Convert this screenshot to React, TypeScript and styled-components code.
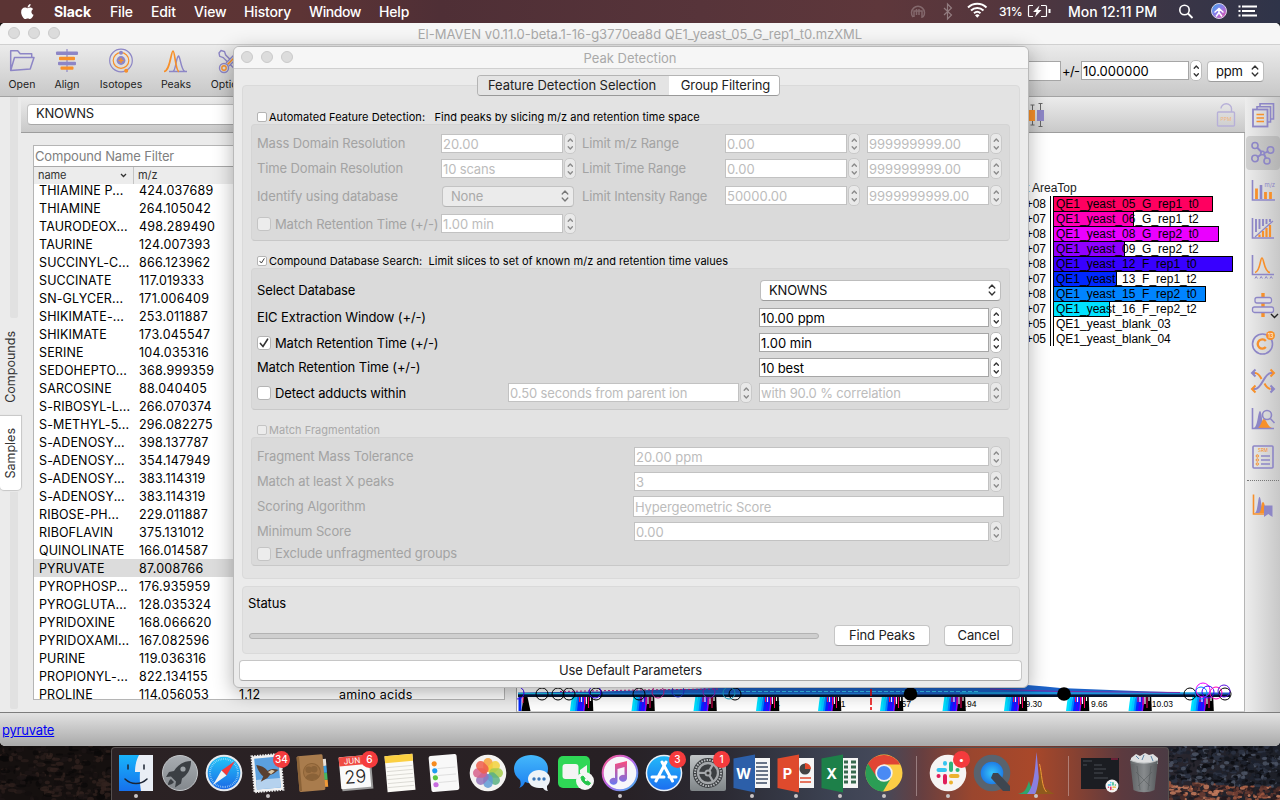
import React from 'react';
import styled, { createGlobalStyle, css } from 'styled-components';

const P = '#8d86c6';
const O = '#f7902b';

const GlobalStyle = createGlobalStyle`
  * { box-sizing: border-box; }
  body { margin: 0; overflow: hidden; font-family: Inter, 'Liberation Sans', sans-serif; }
  svg { display: block; flex: none; }
`;

const Desktop = styled.div`
  position: relative;
  width: 1280px;
  height: 800px;
  overflow: hidden;
  display: flex;
  flex-direction: column;
  background: linear-gradient(90deg, #15100f 0, #15100f 111px, #2a2023 400px, #8a4030 1000px, #29262e 1169px, #1d2028 1280px);
  font-size: 13px;
  color: #000;
`;

/* ---------- menu bar ---------- */
const MenuBar = styled.header`
  height: 23px;
  flex: none;
  display: flex;
  align-items: center;
  padding: 0 0 1px 20px;
  color: #fff;
  font-size: 14px;
  font-weight: 500;
  background: linear-gradient(90deg, #5b3434 0, #5d3435 300px, #4f2f36 440px, #57343a 700px, #5e373b 880px, #54363d 1000px, #403645 1120px, #2f3449 1280px);
`;
const MenuItem = styled.span<{ $w: number; $bold?: boolean; $ls?: number }>`
  width: ${(p) => p.$w}px;
  flex: none;
  white-space: nowrap;
  font-weight: ${(p) => (p.$bold ? 700 : 500)};
  letter-spacing: ${(p) => p.$ls ?? -0.15}px;
`;
const MenuExtras = styled.div`
  margin-left: auto;
  display: flex;
  align-items: center;
  padding-right: 22px;
`;
const Clock = styled.span`
  width: 110px;
  letter-spacing: -0.02px;
  white-space: nowrap;
`;
const Percent = styled.span`
  width: 28px;
  font-size: 12px;
  letter-spacing: -0.4px;
`;

/* ---------- shared window parts ---------- */
const TitleBar = styled.div<{ $h: number }>`
  height: ${(p) => p.$h}px;
  flex: none;
  position: relative;
  display: flex;
  align-items: center;
  justify-content: center;
  background: #f6f6f6;
  border-bottom: 1px solid #d0d0d0;
  color: #a9a9a9;
  font-size: 13px;
  white-space: nowrap;
`;
const Lights = styled.div<{ $x: number }>`
  position: absolute;
  left: ${(p) => p.$x}px;
  top: 4px;
  display: flex;
  gap: 8px;
`;
const Light = styled.i`
  width: 12px;
  height: 12px;
  border-radius: 50%;
  background: #dcdcdc;
  border: 1px solid #cacaca;
`;
const TitleText = styled.span<{ $pr?: number }>`
  padding-right: ${(p) => p.$pr ?? 0}px;
`;

const MainWindow = styled.section`
  height: 723px;
  flex: none;
  display: flex;
  flex-direction: column;
  background: #ebebeb;
  border-radius: 5px;
  overflow: hidden;
`;
const Toolbar = styled.div`
  height: 52px;
  flex: none;
  display: flex;
  background: linear-gradient(#ebebeb, #c8c8c8);
  border-bottom: 1px solid #a3a3a3;
`;
const Tool = styled.div<{ $w: number }>`
  width: ${(p) => p.$w}px;
  flex: none;
  display: flex;
  flex-direction: column;
  align-items: center;
  padding-top: 3px;
  font-size: 10.5px;
  line-height: 13px;
  color: #222;
  gap: 4px;
  white-space: nowrap;
`;
const ToolbarFields = styled.div`
  margin-left: auto;
  display: flex;
  align-items: center;
  padding-right: 16px;
`;
const PlusMinus = styled.span`
  width: 20px;
  padding-left: 1px;
  letter-spacing: -0.7px;
`;

const Body = styled.div`
  height: 615px;
  flex: none;
  display: flex;
`;

/* ---------- left rail ---------- */
const Rail = styled.div`
  width: 21px;
  flex: none;
  display: flex;
  flex-direction: column;
  padding-bottom: 3px;
`;
const RailStrip = styled.div<{ $h?: number }>`
  margin-left: 10px;
  width: 8px;
  ${(p) => (p.$h ? `height: ${p.$h}px;` : 'flex: 1; margin-top: 2px;')}
  background: #e1e1e1;
  border-radius: 0 0 2px 2px;
`;
const RailTab = styled.div<{ $h: number; $on?: boolean }>`
  height: ${(p) => p.$h}px;
  display: flex;
  align-items: center;
  justify-content: center;
  font-size: 12.5px;
  color: #333;
  ${(p) =>
    p.$on &&
    css`
      background: #fff;
      border-radius: 0 0 4px 4px;
      box-shadow: 0 0 1px 1px #c6c6c6;
    `}
  span {
    writing-mode: vertical-rl;
    transform: rotate(180deg);
    line-height: 20px;
  }
`;

/* ---------- compounds ---------- */
const Compounds = styled.div`
  width: 495px;
  flex: none;
  display: flex;
  flex-direction: column;
`;
const PanelBar = styled.div`
  height: 36px;
  flex: none;
  display: flex;
  align-items: center;
  background: linear-gradient(#ececec, #c9c9c9);
  border-bottom: 1px solid #9d9d9d;
`;
const WideSelect = styled.div`
  margin: -1px 0 0 6px;
  width: 480px;
  height: 21px;
  background: #fff;
  border: 1px solid #c3c3c3;
  border-bottom-color: #a8a8a8;
  border-radius: 4px;
  padding-left: 8px;
  line-height: 17px;
  color: #222;
  letter-spacing: -0.25px;
`;
const Table = styled.div`
  margin: 12px 0 0 12px;
  width: 472px;
  height: 555px;
  display: flex;
  flex-direction: column;
  border: 1px solid #b5b5b5;
  background: #fff;
`;
const Filter = styled.div`
  height: 21px;
  flex: none;
  border-bottom: 1px solid #a9a9a9;
  padding: 1px 0 0 1px;
  line-height: 18px;
  color: #808080;
  letter-spacing: -0.14px;
`;
const HeadRow = styled.div`
  height: 17px;
  flex: none;
  display: flex;
  background: #ececec;
  font-size: 11px;
  line-height: 17px;
  color: #333;
`;
const HeadCell = styled.div<{ $w: number }>`
  width: ${(p) => p.$w}px;
  display: flex;
  align-items: center;
  justify-content: space-between;
  padding: 0 6px 0 4px;
  letter-spacing: -0.1px;
  border-right: 1px solid #c4c4c4;
`;
const Rows = styled.div`
  flex: 1;
  overflow: hidden;
  min-height: 0;
`;
const RowList = styled.div`
  margin-top: -3px;
`;
const Row = styled.div<{ $on?: boolean }>`
  height: 18px;
  display: flex;
  line-height: 19px;
  padding-left: 5px;
  white-space: nowrap;
  font-size: 12.5px;
  background: ${(p) => (p.$on ? '#dcdcdc' : 'transparent')};
`;
const NameCell = styled.span`
  width: 100px;
  letter-spacing: 0.12px;
`;
const NumCell = styled.span`
  width: 100px;
  letter-spacing: 0.24px;
`;

/* ---------- plot ---------- */
const PlotColumn = styled.div`
  width: 729px;
  flex: none;
  display: flex;
  flex-direction: column;
`;
const PlotBar = styled(PanelBar)`
  justify-content: flex-end;
  padding-right: 9px;
  gap: 171px;
`;
const Plot = styled.div`
  flex: 1;
  background: #fff;
  border-left: 1px solid #a0a0a0;
  border-right: 1px solid #b5b5b5;
  border-bottom: 1px solid #d0d0d0;
  display: flex;
  flex-direction: column;
`;
const AreaChart = styled.div`
  margin: 47px 0 0 504px;
  width: 220px;
  font-family: 'Liberation Sans', Arial, sans-serif;
  font-size: 12px;
`;
const AreaHead = styled.div`
  height: 16px;
  line-height: 16px;
  padding-left: 5px;
  color: #222;
`;
const AreaRow = styled.div`
  height: 15px;
  display: flex;
  line-height: 17px;
`;
const AreaExp = styled.span`
  width: 30px;
  flex: none;
  padding-right: 4px;
  text-align: right;
  border-right: 1px solid #000;
`;
const AreaBar = styled.div<{ $w: number; $c: string }>`
  margin-left: 2px;
  width: ${(p) => p.$w}px;
  height: ${(p) => (p.$w ? 16 : 15)}px;
  flex: none;
  white-space: nowrap;
  padding-left: 2px;
  background: ${(p) => p.$c};
  border: ${(p) => (p.$w ? '1px solid #000' : '0 solid #000')};
  border-left: 1px solid #000;
  line-height: ${(p) => (p.$w ? 15 : 17)}px;
`;
const AreaName = styled.span`
  position: relative;
  z-index: 1;
`;
const EicArea = styled.div`
  margin-top: auto;
`;

/* ---------- right toolbar ---------- */
const SideBar = styled.div`
  width: 35px;
  flex: none;
  display: flex;
  flex-direction: column;
  align-items: center;
  background: linear-gradient(90deg, #ededed, #c8c8c8);
`;
const SideTool = styled.div<{ $on?: boolean }>`
  width: 34px;
  height: 34px;
  margin: 1px 0 3px;
  flex: none;
  display: flex;
  align-items: center;
  justify-content: center;
  border-radius: 4px;
  background: ${(p) => (p.$on ? 'linear-gradient(90deg,#cfcfcf,#b4b4b4)' : 'none')};
`;
const Dotted = styled.div`
  width: 32px;
  margin: 3px 0 6px;
  border-top: 1px dotted #777;
`;
const StatusBar = styled.div`
  height: 34px;
  flex: none;
  background: linear-gradient(#e2e2e2, #a9a9a9);
  border-top: 1px solid #7c7c7c;
  padding: 8px 0 0 2px;
  line-height: 18px;
  a { color: #0000f5; text-decoration: underline; letter-spacing: -0.2px; }
`;

/* ---------- dialog ---------- */
const Dialog = styled.section`
  position: absolute;
  left: 233px;
  top: 46px;
  width: 796px;
  height: 642px;
  display: flex;
  flex-direction: column;
  background: #ebebeb;
  border: 1px solid #b9b9b9;
  border-radius: 6px;
  box-shadow: 0 5px 20px rgba(0, 0, 0, 0.3);
`;
const DialogTitle = styled(TitleBar)`
  border-radius: 5px 5px 0 0;
`;
const Tabs = styled.div`
  height: 21px;
  align-self: center;
  margin: 6px 0 -11px 0;
  position: relative;
  display: flex;
  border: 1px solid #b4b4b4;
  border-bottom-color: #999;
  border-radius: 4px;
  overflow: hidden;
  flex: none;
  transform: translateX(-3px);
`;
const Tab = styled.div<{ $w: number; $on?: boolean; $ls: number }>`
  width: ${(p) => p.$w}px;
  text-align: center;
  padding-left: ${(p) => (p.$on ? 4 : 0)}px;
  padding-right: ${(p) => (p.$on ? 0 : 2)}px;
  line-height: 19px;
  color: #222;
  white-space: nowrap;
  letter-spacing: ${(p) => p.$ls}px;
  background: ${(p) => (p.$on ? '#fff' : '#e4e4e4')};
`;
const TabPane = styled.div`
  margin: 0 8px;
  height: 494px;
  flex: none;
  padding: 23px 9px 0 8px;
  background: #e3e3e3;
  border: 1px solid #dadada;
  border-radius: 4px;
`;
const GroupTitle = styled.div<{ $off?: boolean }>`
  height: 15px;
  padding-left: 6px;
  display: flex;
  align-items: center;
  gap: 2px;
  font-size: 11px;
  letter-spacing: 0.035px;
  white-space: pre;
  color: ${(p) => (p.$off ? '#a9a9a9' : '#000')};
`;
const Group = styled.div<{ $h: number; $gap: number }>`
  height: ${(p) => p.$h}px;
  margin-bottom: ${(p) => p.$gap}px;
  background: #dadada;
  border: 1px solid #d4d4d4;
  border-bottom-color: #c8c8c8;
  border-radius: 4px;
  padding: 0 7px 0 5px;
`;
const FormRow = styled.div<{ $h: number; $pt?: number }>`
  height: ${(p) => p.$h}px;
  padding-top: ${(p) => p.$pt ?? 0}px;
  display: flex;
  align-items: center;
`;
const Label = styled.div<{ $w?: number; $off?: boolean; $dy?: number }>`
  ${(p) => (p.$w ? `width: ${p.$w}px; flex: none;` : 'flex: 1;')}
  display: flex;
  align-items: center;
  gap: 4px;
  padding-top: ${(p) => p.$dy ?? 0}px;
  white-space: nowrap;
  line-height: 17px;
  letter-spacing: -0.12px;
  color: ${(p) => (p.$off ? '#a3a3a3' : '#000')};
`;
const Box = styled.span<{ $s: number; $off?: boolean }>`
  width: ${(p) => p.$s}px;
  height: ${(p) => p.$s}px;
  flex: none;
  display: flex;
  align-items: center;
  justify-content: center;
  background: ${(p) => (p.$off ? '#ececec' : '#fff')};
  border: 1px solid ${(p) => (p.$off ? '#c4c4c4' : '#b4b4b4')};
  border-radius: ${(p) => (p.$s > 12 ? 3 : 2)}px;
`;
const Field = styled.div<{ $w: number; $h?: number; $off?: boolean; $ls?: number; $mr?: number }>`
  width: ${(p) => p.$w}px;
  height: ${(p) => p.$h ?? 19}px;
  margin-right: ${(p) => p.$mr ?? 0}px;
  flex: none;
  background: #fff;
  border: 1px solid ${(p) => (p.$off ? '#c2c2c2' : '#a6a6a6')};
  padding: 1px 0 0 1px;
  line-height: ${(p) => (p.$h ?? 19) - 2}px;
  white-space: nowrap;
  letter-spacing: ${(p) => p.$ls ?? 0}px;
  color: ${(p) => (p.$off ? '#bcbcbc' : '#000')};
`;
const StepperBox = styled.span<{ $off?: boolean }>`
  width: 12px;
  height: 21px;
  flex: none;
  margin-left: 1px;
  background: ${(p) => (p.$off ? '#e9e9e9' : '#fff')};
  border: 1px solid ${(p) => (p.$off ? '#c9c9c9' : '#bcbcbc')};
  border-radius: 5px;
  display: flex;
  align-items: center;
  justify-content: center;
`;
const Select = styled.div<{ $w: number; $off?: boolean; $mt?: number }>`
  width: ${(p) => p.$w}px;
  height: 21px;
  margin-top: ${(p) => p.$mt ?? 0}px;
  flex: none;
  display: flex;
  align-items: center;
  justify-content: space-between;
  padding: 0 4px 1px 8px;
  border: 1px solid ${(p) => (p.$off ? '#c3c3c3' : '#bdbdbd')};
  border-bottom-color: ${(p) => (p.$off ? '#b4b4b4' : '#9d9d9d')};
  border-radius: 4px;
  background: ${(p) => (p.$off ? '#ebebeb' : '#fff')};
  color: ${(p) => (p.$off ? '#a9a9a9' : '#111')};
  line-height: 16px;
  letter-spacing: -0.2px;
`;
const Space = styled.span<{ $w: number }>`
  width: ${(p) => p.$w}px;
  flex: none;
`;
const StatusPane = styled.div`
  margin: 7px 8px 0;
  height: 68px;
  flex: none;
  padding: 8px 5px 0 5px;
  background: #e3e3e3;
  border: 1px solid #dadada;
  border-radius: 4px;
`;
const ProgressRow = styled.div`
  display: flex;
  align-items: center;
  margin-top: 13px;
  padding-left: 1px;
`;
const Progress = styled.div`
  width: 570px;
  height: 6px;
  border: 1px solid #b3b3b3;
  border-radius: 3px;
  background: #cfcfcf;
`;
const Button = styled.button<{ $w: number; $ml?: number }>`
  width: ${(p) => p.$w}px;
  margin-left: ${(p) => p.$ml ?? 0}px;
  height: 21px;
  flex: none;
  padding: 0 0 1px;
  font: inherit;
  line-height: 18px;
  letter-spacing: -0.13px;
  color: #222;
  background: #fff;
  border: 1px solid #c6c6c6;
  border-bottom-color: #a9a9a9;
  border-radius: 4px;
`;
const DefaultsRow = styled.div`
  padding: 6px 0 0 5px;
  display: flex;
`;

/* ---------- dock ---------- */
const Rocks = styled.div`
  position: absolute;
  left: 0;
  top: 746px;
`;
const DockBar = styled.nav`
  position: absolute;
  left: 111px;
  top: 747px;
  width: 1058px;
  height: 53px;
  padding: 0 2px;
  display: flex;
  border: 1px solid #56504f;
  border-bottom: 0;
  border-radius: 4px 4px 0 0;
  background: linear-gradient(90deg, #2b2224 0, #272024 500px, #2b2a33 610px, #3c4252 720px, #45495a 770px, #673f40 810px, #9a462e 860px, #a9482a 920px, #8a4231 960px, #5c3a3f 1010px, #4a3b44 1058px);
`;
const DockItem = styled.div`
  width: 44px;
  flex: none;
  position: relative;
  display: flex;
  justify-content: center;
  padding-top: 4px;
`;
const RunDot = styled.i`
  position: absolute;
  bottom: 2px;
  width: 4px;
  height: 4px;
  border-radius: 50%;
  background: #c9c4c6;
`;
const Badge = styled.b`
  position: absolute;
  top: 3px;
  right: 0;
  width: 17px;
  height: 17px;
  border-radius: 50%;
  background: #f53b3d;
  color: #fff;
  font-size: 10px;
  font-weight: 500;
  line-height: 17px;
  text-align: center;
`;
const DockSep = styled.div`
  width: 20px;
  flex: none;
  display: flex;
  justify-content: center;
  i { width: 1px; margin-top: 8px; height: 40px; background: rgba(220, 200, 200, 0.45); }
`;

/* ---------- small pieces ---------- */
const Arrows = ({ c = '#333', h = 13, w = 6 }: { c?: string; h?: number; w?: number }) => (
  <svg width={w + 2} height={h} viewBox={`0 0 ${w + 2} ${h}`} fill="none" stroke={c} strokeWidth="1.3" strokeLinecap="round" strokeLinejoin="round">
    <path d={`M1.2 ${w / 2 + 1} L${w / 2 + 1} 1 L${w + 0.8} ${w / 2 + 1}`} />
    <path d={`M1.2 ${h - w / 2 - 1} L${w / 2 + 1} ${h - 1} L${w + 0.8} ${h - w / 2 - 1}`} />
  </svg>
);
const Stepper = ({ off }: { off?: boolean }) => (
  <StepperBox $off={off}><Arrows c={off ? '#8a8a8a' : '#333'} h={12} w={4.6} /></StepperBox>
);
const Check = ({ s, on, off }: { s: number; on?: boolean; off?: boolean }) => (
  <Box $s={s} $off={off}>
    {on && (
      <svg width={s - 4} height={s - 4} viewBox="0 0 10 10" fill="none" stroke="#333" strokeWidth="1.6" strokeLinecap="round">
        <path d="M1.4 5.4 L4 8.4 L8.6 1.2" />
      </svg>
    )}
  </Box>
);
const Spin = ({ w, v, off }: { w: number; v: string; off?: boolean }) => (
  <><Field $w={w} $off={off} $ls={/[a-z]{4}/.test(v) ? -0.14 : 0}>{v}</Field><Stepper off={off} /></>
);
const WindowLights = ({ x }: { x: number }) => <Lights $x={x}><Light /><Light /><Light /></Lights>;

/* ---------- toolbar icons ---------- */
const OpenIcon = () => (
  <svg width="26" height="26" viewBox="0 0 26 26" fill="none" stroke={P} strokeWidth="1.5" strokeLinejoin="round">
    <path d="M1.700 22.500V2.700h7l2.500 3h11.500v4M1.700 22.500L5.500 9.500h19.500l-3.800 11.500z" />
  </svg>
);
const AlignIcon = () => (
  <svg width="26" height="26" viewBox="0 0 26 26">
    <path d="M13 1v23" stroke={P} strokeWidth="1.200" />
    <rect x="2" y="3.500" width="22" height="3.500" rx="1" fill={P} />
    <rect x="5" y="8.800" width="16" height="3.500" rx="1" fill={O} />
    <rect x="4" y="13.800" width="18" height="3.500" rx="1" fill={P} />
    <rect x="6.500" y="18.500" width="13" height="3.300" rx="1" fill={O} />
  </svg>
);
const IsotopeIcon = () => (
  <svg width="26" height="26" viewBox="0 0 26 26" fill="none">
    <circle cx="13" cy="12.500" r="11.300" stroke={P} strokeWidth="1.200" />
    <circle cx="13" cy="12.500" r="7.800" stroke={O} strokeWidth="1.200" />
    <circle cx="13" cy="12.500" r="4.400" fill={P} />
    <path d="M13 10v5M10.500 12.500h5" stroke={O} strokeWidth="1.300" />
    <circle cx="13" cy="4.700" r="2" fill={P} />
    <circle cx="18.200" cy="22.700" r="2" fill={O} />
  </svg>
);
const PeaksIcon = () => (
  <svg width="26" height="26" viewBox="0 0 26 26" fill="none" strokeWidth="1.400">
    <path d="M6 23.500h18M10 23.500c3-1 3-14.500 5.500-15.500 2 1 2.500 14.500 6.500 15.500" stroke={P} />
    <path d="M1 23.500c6 0 7-20.500 9-20.500s2.500 20.500 6 20.500" stroke={O} strokeWidth="1.700" />
  </svg>
);
const OptionsIcon = () => (
  <svg width="26" height="26" viewBox="0 0 26 26" fill="none" strokeWidth="1.400">
    <path d="M4 2.500l3.500 1 1.200 3.500 14 14-2.500 2.500-14-14-3.500-1.200L2 5z" stroke={P} />
    <path d="M9 15L20 4l3 3-11 11" stroke={P} fill="#dcdcdc" />
    <path d="M10.500 16.500L21 6" stroke={O} strokeWidth="1.600" />
    <circle cx="7" cy="20" r="4.500" stroke={P} fill="#dcdcdc" />
    <circle cx="7" cy="20" r="2.200" stroke={O} />
  </svg>
);
const BoxPlotIcon = () => (
  <svg width="20" height="26" viewBox="0 0 20 26">
    <path d="M7.500 3v20M15.500 1v24M5.500 3h4M5.500 23h4M13.500 1.500h4M13.500 24.500h4" stroke="#666" />
    <rect x="2" y="8" width="8" height="11" fill={O} />
    <rect x="12" y="8" width="7" height="11" fill={P} />
  </svg>
);
const LockIcon = () => (
  <svg width="20" height="26" viewBox="0 0 20 26" fill="none" stroke="#b7b0d8" strokeWidth="1.400">
    <path d="M5 6.500a5 4.500 0 0 1 10.500 0V10" />
    <rect x="1.500" y="10" width="17" height="14" rx="1" />
    <text x="10" y="19" fontSize="5" textAnchor="middle" fill="#f3b57c" stroke="none" fontFamily="Inter">PPM</text>
  </svg>
);

const SideIcon = ({ children }: { children: React.ReactNode }) => (
  <svg width="26" height="26" viewBox="0 0 26 26" fill="none" stroke={P} strokeWidth="1.600">{children}</svg>
);
const sideIcons: React.ReactNode[] = [
  <>
    <path d="M10 5V1.700h13.500V17H20M7 8V4.700h13.500V20H17" />
    <rect x="3" y="7.500" width="14.500" height="17" strokeWidth="1.800" />
    <path d="M6.500 12.500h7.500M6.500 16h7.500M6.500 19.500h7.500" stroke={O} />
  </>,
  <>
    <path d="M7 7.500l5 5M15 13l3.500-2M11 14.500l-4 3M14 14l2 4.500" strokeWidth="2" />
    <circle cx="5" cy="5.500" r="3" /><circle cx="20.500" cy="10" r="3.200" /><circle cx="5" cy="18.500" r="3.200" /><circle cx="17" cy="21" r="3" /><circle cx="12.500" cy="13" r="1.800" />
  </>,
  <>
    <path d="M2.500 2v20H25" />
    <path d="M6.500 10.500v10.500M15.500 14v7M20.500 14v7" stroke={O} strokeWidth="2.800" />
    <path d="M11 7v14" strokeWidth="2.600" />
    <text x="19.800" y="9" fontSize="6" textAnchor="middle" fill={P} stroke="none" fontFamily="Inter">m/z</text>
  </>,
  <>
    <path d="M2.500 2v20H24" />
    <path d="M6 3v13M9.500 3v10M13 3v7M16.500 3v5M20 3v3" strokeWidth="1.900" />
    <path d="M5 21L23 5" strokeWidth="1.200" />
    <path d="M9.500 21v-2.500M13 21v-6M16.500 21V12M20 21V9" stroke={O} strokeWidth="2.200" />
  </>,
  <>
    <path d="M2.500 1v19.500H24" />
    <path d="M5 18.500c5.500-1 5-14.500 7-14.500s1.800 14 8 14.500" stroke={O} />
    <path d="M5 24.500l1.200-2 1.200 2M10 24.500l1.200-2 1.200 2M15 24.500l1.200-2 1.200 2M20 24.500l1.200-2 1.200 2" strokeWidth="1" />
  </>,
  <>
    <path d="M13 1v24" stroke={O} strokeWidth="3.400" />
    <rect x="5" y="5.500" width="16.500" height="5.500" rx="2" fill="#dedde4" strokeWidth="1.300" />
    <rect x="2.500" y="15" width="21" height="5.500" rx="2" fill="#dedde4" strokeWidth="1.300" />
  </>,
  <>
    <circle cx="12.500" cy="14" r="10" />
    <path d="M15.800 11a4.600 4.600 0 1 0 0 6" stroke={O} strokeWidth="2.300" />
    <circle cx="20.500" cy="5.500" r="4.500" fill={O} stroke="none" />
    <text x="20.500" y="7.600" fontSize="5.500" textAnchor="middle" fill="#fff" stroke="none" fontFamily="Inter">13</text>
  </>,
  <>
    <path d="M23 5h-2c-7 0-9 16-16 16H3" strokeWidth="2" />
    <path d="M20.500 17.500L24 21l-3.500 3.500M24 21h-3" strokeWidth="2" />
    <path d="M5.500 1.500L2 5l3.500 3.500M2 5h3" strokeWidth="2" />
    <path d="M5 5c3 0 5 3 6.500 6M14.500 15.500c1.500 3 3.500 5 6 5.500" stroke={O} strokeWidth="2" />
    <path d="M20.500 1.500L24 5l-3.500 3.500M5.500 17.500L2 21l3.500 3.500" stroke={O} strokeWidth="2" />
  </>,
  <>
    <path d="M4 22c4-2 4-17 6-17s2 15 5 17z" fill={P} stroke="none" />
    <path d="M8 22c3-2 4-9 6-9s4 8 8 9z" fill={O} stroke="none" />
    <path d="M2.500 2v20.500H24" />
    <circle cx="17" cy="9" r="4.500" /><path d="M20.300 12.500L24.500 17" />
  </>,
  <>
    <rect x="3" y="2" width="20" height="22" rx="1" />
    <text x="13" y="8" fontSize="4.500" textAnchor="middle" fill={O} stroke="none" fontFamily="Inter">SRM</text>
    <path d="M11 12h9M11 16h9M11 20h9" strokeWidth="1.400" />
    <g stroke={O} strokeWidth="1"><circle cx="7.300" cy="12" r="1.200" /><circle cx="7.300" cy="16" r="1.200" /><circle cx="7.300" cy="20" r="1.200" /></g>
  </>,
];
const BookmarkPeakIcon = () => (
  <SideIcon>
    <path d="M5 21c3-2 3-16 4.500-16s2 14 5 16z" fill={P} stroke="none" />
    <path d="M9 21c3-2 2-11 4-11s2 9 5 11z" fill={O} stroke="none" />
    <path d="M3.500 2.500v19.500H16" stroke={O} />
    <path d="M14 13.500h8.500V25l-4.200-3-4.300 3z" fill={P} stroke="none" />
  </SideIcon>
);

/* ---------- data ---------- */
const compounds: [string, string][] = [
  ['THIAMINE P...', '424.037689'], ['THIAMINE', '264.105042'], ['TAURODEOX...', '498.289490'],
  ['TAURINE', '124.007393'], ['SUCCINYL-C...', '866.123962'], ['SUCCINATE', '117.019333'],
  ['SN-GLYCER...', '171.006409'], ['SHIKIMATE-...', '253.011887'], ['SHIKIMATE', '173.045547'],
  ['SERINE', '104.035316'], ['SEDOHEPTO...', '368.999359'], ['SARCOSINE', '88.040405'],
  ['S-RIBOSYL-L...', '266.070374'], ['S-METHYL-5...', '296.082275'], ['S-ADENOSY...', '398.137787'],
  ['S-ADENOSY...', '354.147949'], ['S-ADENOSY...', '383.114319'], ['S-ADENOSY...', '383.114319'],
  ['RIBOSE-PH...', '229.011887'], ['RIBOFLAVIN', '375.131012'], ['QUINOLINATE', '166.014587'],
  ['PYRUVATE', '87.008766'], ['PYROPHOSP...', '176.935959'], ['PYROGLUTA...', '128.035324'],
  ['PYRIDOXINE', '168.066620'], ['PYRIDOXAMI...', '167.082596'], ['PURINE', '119.036316'],
  ['PROPIONYL-...', '822.134155'], ['PROLINE', '114.056053'],
];
const areas: [string, string, number, string][] = [
  ['+08', 'QE1_yeast_05_G_rep1_t0', 160, '#ff0060'],
  ['+07', 'QE1_yeast_06_G_rep1_t2', 81, '#ff00b8'],
  ['+08', 'QE1_yeast_08_G_rep2_t0', 166, '#ea00ff'],
  ['+07', 'QE1_yeast_09_G_rep2_t2', 72, '#9000ff'],
  ['+08', 'QE1_yeast_12_F_rep1_t0', 180, '#3800ff'],
  ['+07', 'QE1_yeast_13_F_rep1_t2', 64, '#0028ff'],
  ['+08', 'QE1_yeast_15_F_rep2_t0', 153, '#0084ff'],
  ['+07', 'QE1_yeast_16_F_rep2_t2', 57, '#00e1ff'],
  ['+05', 'QE1_yeast_blank_03', 0, 'transparent'],
  ['+05', 'QE1_yeast_blank_04', 0, 'transparent'],
];

/* ---------- chromatogram strip ---------- */
const combStarts = [570, 631.5, 693.5, 756, 818, 880, 942.5, 1004, 1066, 1128.5, 1190.5];
const wedges: [number, string][] = [
  [3, '#00e1ff'], [5.5, '#00c8ff'], [8, '#0084ff'], [10, '#0028ff'], [12.5, '#3800ff'],
  [14.5, '#0028ff'], [16, '#9000ff'], [17.5, '#000'], [19.5, '#000'], [21.5, '#000'],
];
const Comb = ({ x }: { x: number }) => (
  <g transform={`translate(${x} 17)`}>
    {wedges.map(([dx, c], i) => (
      <path key={i} d={`M${dx - 3} 14L${dx - 1.2} 0h2.400L${dx + 1.8} 14z`} fill={c} />
    ))}
    <path d="M9.500 0v5M14.500 0v8M18.500 0v11" stroke="#ff0060" strokeWidth="1" />
    <path d="M11.500 0v5M16.500 0v7M20.500 0v4" stroke="#fff" strokeWidth="1.200" />
  </g>
);
const ring = (x: number, c: string, y = 14, r = 6) => <circle key={`${x}${y}`} cx={x} cy={y} r={r} fill="none" stroke={c} />;
const Eic = () => (
  <svg width="727" height="31" viewBox="517 0 727 31">
    <path d="M518 12.500 L560 12 600 11.500 650 10 690 9 740 7 1005 7 1020 6.500 1027 5 1045 6.500 1060 8 1110 10 1150 11.500 1185 12.500 1230 12.500 V16 H518z" fill="#1c62c8" />
    <path d="M518 13.500H900M960 13h250" stroke="#19c4e8" strokeWidth="1" />
    <path d="M600 14H900" stroke="#1f7fe0" strokeWidth="2" />
    <path d="M560 11.500L640 10 720 9" stroke="#c01a8a" strokeDasharray="2 2" fill="none" />
    <path d="M990 9L1060 11.500 1180 12.500" stroke="#7a2ca8" fill="none" />
    <path d="M740 11.500H980" stroke="#35c4f0" strokeDasharray="4 2" />
    <rect x="518" y="14.500" width="712" height="2.500" fill="#051530" />
    <g fontFamily="Liberation Sans" fontSize="8.500" textAnchor="end" fill="#000">
      {['7.84', '8.21', '8.57', '8.94', '9.30', '9.66', '10.03'].map((t, i) => (
        <text key={t} x={780 + i * 65.5} y="27">{t}</text>
      ))}
    </g>
    <g transform="translate(518.500 17)">
      <path d="M0 0h3v14h-3z" fill="#0028ff" /><path d="M3 14L5 0h4l3 14z" fill="#000" /><path d="M4.500 0v6" stroke="#ff0060" />
    </g>
    {combStarts.map((x) => <Comb key={x} x={x} />)}
    {[542, 558, 569, 596, 639, 735, 1190, 1225].map((x) => ring(x, '#000'))}
    {ring(595, '#3800ff', 12)}{ring(658, '#c01a8a', 12)}{ring(678, '#2430d0', 11)}{ring(709, '#8a20c0', 12)}{ring(729, '#19a8c8', 13)}{ring(518, '#3800ff', 13)}
    {ring(1203, '#ea00ff', 10, 7)}{ring(1201, '#0084ff', 13)}{ring(1208, '#3800ff', 12)}{ring(1216, '#ff00b8', 13)}{ring(1224, '#5a10e0', 11)}
    <path d="M871 9v21" stroke="#e00" strokeWidth="1.500" strokeDasharray="7 2" />
    <circle cx="910.500" cy="14" r="6.800" /><circle cx="1064" cy="14" r="6.800" />
  </svg>
);

/* ---------- desktop rock texture ---------- */
const shade = ['#2c201d', '#1c1516', '#0a0808', '#33241f', '#120e0e'];
const shadeR = ['#2d3444', '#14161d', '#4b5364', '#1d222e', '#0c0d12'];
const shadeB = ['#a0583f', '#4a2c28', '#c47a5c', '#231a1e', '#6b3c33'];
const RockTexture = () => {
  const cells: React.ReactNode[] = [];
  let seed = 7;
  const rnd = () => { seed = (seed * 16807) % 2147483647; return seed / 2147483647; };
  for (let i = 0; i < 260; i++) {
    const x = rnd() * 112, y = rnd() * 54, k = Math.floor(rnd() * 5);
    cells.push(<ellipse key={`l${i}`} cx={x} cy={y} rx={1 + rnd() * 4} ry={1 + rnd() * 2} fill={shade[k]} opacity=".7" />);
  }
  for (let i = 0; i < 700; i++) {
    const x = 1168 + rnd() * 112, y = rnd() * 54, k = Math.floor(rnd() * 5);
    cells.push(<ellipse key={`r${i}`} cx={x} cy={y} rx={1 + rnd() * 2.5} ry={0.8 + rnd() * 1.6} fill={y > 36 + (x - 1168) * 0.05 ? shadeB[k] : shadeR[k]} opacity=".85" />);
  }
  return <svg width="1280" height="54" viewBox="0 0 1280 54">{cells}</svg>;
};

/* ---------- dock icons ---------- */
const D = ({ children }: { children: React.ReactNode }) => (
  <svg width="40" height="42" viewBox="0 0 40 42">{children}</svg>
);
const Finder = () => (
  <D>
    <defs><linearGradient id="fn" x2="0" y2="1"><stop stopColor="#18b4fb" /><stop offset="1" stopColor="#1670ec" /></linearGradient></defs>
    <rect x="3" y="3" width="34" height="36" fill="#e9eef5" />
    <path d="M3 3h20c-3 6-4 11-4 17h5c-.5 7 0 13 1 19H3z" fill="url(#fn)" />
    <path d="M12 13v4M28 13v4M9 27c6 6 16 6 22 0" fill="none" stroke="#1b2433" strokeWidth="1.500" strokeLinecap="round" />
  </D>
);
const Launchpad = () => (
  <D>
    <defs><linearGradient id="lp" x2="0" y2="1"><stop stopColor="#a9adb2" /><stop offset="1" stopColor="#83888d" /></linearGradient></defs>
    <circle cx="20" cy="21" r="17.500" fill="url(#lp)" stroke="#c4c7ca" />
    <path d="M31 9c-8 0-14 5-17 10l-5 1-3 5 5-.5 5 5-1 6 6-4 1-5c5-3 9-9 9-17.500zM11 27c-2 1-3 4-3 6 2 0 5-1 6-3z" fill="#3b3f44" />
    <circle cx="23" cy="17" r="2.600" fill="#9ba0a5" />
  </D>
);
const Safari = () => (
  <D>
    <defs><linearGradient id="sf" x2="0" y2="1"><stop stopColor="#22c5f8" /><stop offset="1" stopColor="#1b69e6" /></linearGradient></defs>
    <circle cx="20" cy="21" r="18.300" fill="#e6e9ec" /><circle cx="20" cy="21" r="16.300" fill="url(#sf)" />
    <circle cx="20" cy="21" r="14" fill="none" stroke="#cdeefb" strokeWidth="2" strokeDasharray=".6 1.200" opacity=".8" />
    <path d="M31 9L17.500 18.500l5 5z" fill="#f5383a" /><path d="M9 33l8.500-14.500 5 5z" fill="#f2f2f2" />
  </D>
);
const Mail = () => (
  <D>
    <g transform="rotate(-5 20 21)">
      <rect x="5" y="3" width="29" height="36" fill="#f1f1f1" stroke="#f1f1f1" strokeWidth="2" strokeDasharray="1.500 1.200" />
      <rect x="7.500" y="5.500" width="24" height="31" fill="#5ba0df" />
      <rect x="7.500" y="27" width="24" height="9.500" fill="#b5d2ee" />
      <path d="M9 12c5 1 8 3 11 7 3-2 7-2 11 0-3 1-5 4-9 4l-3 3-7 3 3-5c-3-3-5-7-6-12z" fill="#5a4030" />
      <path d="M20 20l4-2 3 1.500-4 3z" fill="#d9c7a8" />
    </g>
  </D>
);
const Contacts = () => (
  <D>
    <g transform="rotate(-5 20 21)">
      <rect x="30" y="8" width="5" height="7" fill="#e8e2da" /><rect x="30" y="15" width="5" height="7" fill="#3f9ee0" /><rect x="30" y="22" width="5" height="7" fill="#46b860" /><rect x="30" y="29" width="5" height="7" fill="#f09a38" />
      <rect x="6" y="3" width="26" height="36" rx="1.500" fill="#a97c4d" /><path d="M6 4h2.500v34H6z" fill="#8a6238" />
      <circle cx="20" cy="20" r="8.500" fill="#a07345" stroke="#8d6337" />
      <circle cx="17" cy="17.500" r="3.300" fill="#8a6238" /><circle cx="22.500" cy="17.500" r="3.300" fill="#8a6238" /><path d="M13 25.500c1-3 4-4 7-4s6 1 7 4c-4 3.500-10 3.500-14 0z" fill="#8a6238" />
    </g>
  </D>
);
const Calendar = () => (
  <D>
    <g transform="rotate(-5 20 21)">
      <path d="M5 9h31v29H5z" fill="#9a9a9a" /><rect x="4" y="4" width="30" height="32" rx="1" fill="#fafafa" /><path d="M4 4h30v9H4z" fill="#ef4b43" />
      <text x="17" y="11.500" fontSize="8" fill="#fff" textAnchor="middle" fontFamily="Inter">JUN</text>
      <text x="19" y="31" fontSize="18" fontWeight="300" fill="#222" textAnchor="middle" fontFamily="Inter">29</text>
    </g>
  </D>
);
const Notes = () => (
  <D>
    <g transform="rotate(-5 20 21)">
      <rect x="6" y="3" width="28" height="36" fill="#fbfaf6" /><rect x="6" y="3" width="28" height="7" fill="#fbcf41" />
      <path d="M7 14.500h26M7 18.500h26M7 22.500h26M7 26.500h26M7 30.500h26M7 34.500h26" stroke="#d5d3cd" strokeWidth=".8" />
    </g>
  </D>
);
const Reminders = () => (
  <D>
    <g transform="rotate(-5 20 21)">
      <rect x="6" y="3" width="28" height="36" rx="2" fill="#f8f8f8" />
      <path d="M14 16h18M14 23h18M14 30h18" stroke="#d9d9d9" strokeWidth=".8" />
      <circle cx="11" cy="11" r="2.600" fill="#f58a1f" /><circle cx="11" cy="18" r="2.600" fill="#1d9bf2" /><circle cx="11" cy="25" r="2.600" fill="#5bc744" /><circle cx="11" cy="32" r="2.600" fill="#c86be0" />
    </g>
  </D>
);
const Photos = () => (
  <D>
    <circle cx="20" cy="21" r="18.300" fill="#f4f3f1" />
    {['#f7a13a', '#f2d13c', '#a5cb4b', '#59b083', '#5f9bd6', '#9473bb', '#d7618c', '#ee5e4b'].map((c, i) => (
      <rect key={c} x="15.300" y="6" width="9.400" height="14" rx="4.700" fill={c} opacity=".85" transform={`rotate(${i * 45} 20 21)`} />
    ))}
  </D>
);
const Messages = () => (
  <D>
    <defs><linearGradient id="ms" x2="0" y2="1"><stop stopColor="#44b8fb" /><stop offset="1" stopColor="#1d80f1" /></linearGradient></defs>
    <path d="M19 3c10 0 17 6 17 14s-7 14-17 14c-2 0-4 0-6-1-1 3-3 5-6 6 2-2 2-5 1-8-4-3-6-7-6-11C2 9 9 3 19 3z" fill="url(#ms)" />
    <path d="M27 18c6 0 11 4 11 9 0 3-1 5-3 7 0 2 0 4 1 5-2 0-4-1-5-3h-4c-6 0-11-4-11-9s5-9 11-9z" fill="#eef3f8" />
    <circle cx="22" cy="27" r="1.700" fill="#3a76b8" /><circle cx="27" cy="27" r="1.700" fill="#3a76b8" /><circle cx="32" cy="27" r="1.700" fill="#3a76b8" />
  </D>
);
const FaceTime = () => (
  <D>
    <rect x="2" y="4" width="32" height="32" rx="5" fill="#2fd756" /><rect x="6.500" y="12" width="16" height="15" rx="3" fill="#f4f4f4" /><path d="M24 18l7-5v13l-7-5z" fill="#f4f4f4" />
    <circle cx="29" cy="29" r="9" fill="#f4f6f4" /><path d="M25 25c0 4 4 8 8 8l1.500-2-3-2-1.500 1-2-2 1-1.500-2-2.500z" fill="#23c64a" stroke="#23c64a" />
  </D>
);
const ITunes = () => (
  <D>
    <defs><linearGradient id="it" x1="0" y1="0" x2="1" y2="1"><stop stopColor="#fb5b8b" /><stop offset=".5" stopColor="#b765e8" /><stop offset="1" stopColor="#39b9f5" /></linearGradient><linearGradient id="it2" x2="0" y2="1"><stop stopColor="#fa4b7c" /><stop offset="1" stopColor="#6a78f0" /></linearGradient></defs>
    <circle cx="20" cy="21" r="17.300" fill="#f7f6fa" stroke="url(#it)" strokeWidth="2" />
    <path d="M15 12l12-3v17a4 3.500 0 1 1-2.500-3V15L17.500 17v12a4 3.500 0 1 1-2.500-3z" fill="url(#it2)" />
  </D>
);
const AppStore = () => (
  <D>
    <defs><linearGradient id="as" x2="0" y2="1"><stop stopColor="#22b9f9" /><stop offset="1" stopColor="#1c6ff0" /></linearGradient></defs>
    <circle cx="20" cy="21" r="18.300" fill="#e9eff5" /><circle cx="20" cy="21" r="16.800" fill="url(#as)" />
    <path d="M22 10L12 29M18 10l10.500 19M8 25h12M25 25h7" stroke="#fff" strokeWidth="3" strokeLinecap="round" fill="none" />
  </D>
);
const Prefs = () => (
  <D>
    <defs><linearGradient id="pf" x2="0" y2="1"><stop stopColor="#c2c5c7" /><stop offset="1" stopColor="#7f8588" /></linearGradient></defs>
    <rect x="2" y="3" width="36" height="36" rx="2" fill="url(#pf)" />
    <circle cx="20" cy="21" r="15" fill="#3c3f42" /><circle cx="20" cy="21" r="13" fill="none" stroke="#b9bcbf" strokeWidth="2" strokeDasharray="1.500 1.200" />
    <circle cx="20" cy="21" r="10" fill="none" stroke="#a5a8ab" strokeWidth="2.300" />
    <path d="M20 21V11M20 21l9 5M20 21l-9 5" stroke="#a5a8ab" strokeWidth="2.200" transform="rotate(30 20 21)" /><circle cx="20" cy="21" r="3.500" fill="#a5a8ab" /><circle cx="20" cy="21" r="1.600" fill="#333" />
  </D>
);
const Office = ({ c, t, children }: { c: string; t: string; children: React.ReactNode }) => (
  <D>
    <rect x="22" y="6" width="16" height="30" fill="#f5f5f5" />{children}
    <path d="M1.500 6.500L23 2.500v38L1.500 36z" fill={c} />
    <text x="11.500" y="26.500" fontSize="14.500" fontWeight="700" textAnchor="middle" fill="#fff" fontFamily="Inter">{t}</text>
  </D>
);
const Chrome = () => (
  <D>
    <circle cx="20" cy="21" r="18.500" fill="#fccd45" />
    <path d="M20 21L4 11.700A18.500 18.500 0 0 0 19 39.500l8-13.500z" fill="#2b9e55" />
    <path d="M20 12.500h16A18.500 18.500 0 0 0 4 11.700L12 24z" fill="#e04534" />
    <circle cx="20" cy="21" r="8.700" fill="#f1f1f1" /><circle cx="20" cy="21" r="7" fill="#4a8af4" />
  </D>
);
const SlackMark = () => (
  <g fill="none" strokeWidth="4" strokeLinecap="round">
    <path d="M10.500 18h6.500M17 11v.8" stroke="#36c5f0" />
    <path d="M23 11.500V18M29.500 18h.1" stroke="#2eb67d" />
    <path d="M29.500 24H23M23 30.500v.1" stroke="#ecb22e" />
    <path d="M17 24v6.500M10.500 24h.1" stroke="#e01e5a" />
  </g>
);
const Slack = () => <D><circle cx="20" cy="21" r="18.300" fill="#f6f4f3" /><SlackMark /></D>;
const QuickTime = () => (
  <D>
    <defs><radialGradient id="qt"><stop stopColor="#36c6fb" /><stop offset="1" stopColor="#1766e0" /></radialGradient></defs>
    <circle cx="20" cy="21" r="14.800" fill="url(#qt)" stroke="#59636e" strokeWidth="7" />
    <path d="M21 21h5l12 13v5h-7L19 26z" fill="#3e4650" />
  </D>
);
const Maven = () => (
  <D>
    <path d="M2 42c7-2 8-4 11-13 2 8 5 11 9 13z" fill="#2fa56c" />
    <path d="M11 42c7-6 8-26 9.500-42 2 17 2 36 6.500 42z" fill="#8a7fe0" />
    <path d="M19 42c3-4 4-20 5.500-27 2 8 2 19 5 23 2-3 4 2 9 4z" fill="#8f5a1c" /><path d="M23.500 12c2.500 9 2 23 7 28" stroke="#f09a38" fill="none" />
  </D>
);
const Thumb = () => (
  <D>
    <rect x="1" y="6" width="38" height="31" fill="#1b1d22" /><path d="M3 9h9M14 13h8M14 17h12M14 21h9M14 26h14M3 13h4" stroke="#54585f" strokeWidth=".8" /><path d="M31 7h7" stroke="#b5224a" />
    <circle cx="32" cy="34" r="6.500" fill="#f6f4f3" /><g transform="translate(24.700 26.500) scale(.36)"><SlackMark /></g>
  </D>
);
const Trash = () => (
  <D>
    <defs><linearGradient id="tr"><stop stopColor="#5d6264" /><stop offset=".5" stopColor="#8a8f91" /><stop offset="1" stopColor="#54595b" /></linearGradient></defs>
    <path d="M7 6l5-4 4 2 5-3 4 2 4-1 5 4v6H7z" fill="#dedfe0" /><path d="M12 4l3 3M20 3l-2 5M27 4l2 5" stroke="#5d87a8" />
    <path d="M6 8c8 4 20 4 28 0l-3.500 30c-6 3-15 3-21 0z" fill="url(#tr)" opacity=".95" /><path d="M6 8c8 4 20 4 28 0" fill="none" stroke="#c4c7c8" />
    <path d="M13 14l3 24M27 14l-3 24M12 20l14 14M28 20L14 34" stroke="#4b5052" strokeWidth=".7" opacity=".6" />
  </D>
);

const wordLines = <path d="M24 11h11M24 15h12M24 19h12M24 23h12M24 27h12M24 31h11" stroke="#3b4a63" strokeWidth="1.500" />;
const pptArt = <><circle cx="29" cy="17" r="5.500" fill="#444" /><path d="M29 17V11a6 6 0 0 1 6 6z" fill="#e0492c" /><path d="M24 26h11M24 30h11" stroke="#e0492c" strokeWidth="1.500" /></>;
const excelArt = <path d="M24 10h4M31 10h5M24 15h4M31 15h5M24 20h4M31 20h5M24 25h4M31 25h5M24 30h4M31 30h5" stroke="#38694f" strokeWidth="3" />;

type DockEntry = { icon: React.ReactNode; dot?: boolean; badge?: string };
const dockA: DockEntry[] = [
  { icon: <Finder />, dot: true }, { icon: <Launchpad /> }, { icon: <Safari /> }, { icon: <Mail />, dot: true, badge: '34' },
  { icon: <Contacts /> }, { icon: <Calendar />, badge: '6' }, { icon: <Notes /> }, { icon: <Reminders /> }, { icon: <Photos /> },
  { icon: <Messages /> }, { icon: <FaceTime /> }, { icon: <ITunes />, dot: true }, { icon: <AppStore />, badge: '3' },
  { icon: <Prefs />, badge: '1' }, { icon: <Office c="#2c5fa9" t="W">{wordLines}</Office>, dot: true },
  { icon: <Office c="#df4a2d" t="P">{pptArt}</Office>, dot: true }, { icon: <Office c="#1d8049" t="X">{excelArt}</Office>, dot: true },
  { icon: <Chrome />, dot: true },
];
const dockB: DockEntry[] = [{ icon: <Slack />, dot: true, badge: '•' }, { icon: <QuickTime /> }, { icon: <Maven />, dot: true }];
const dockC: DockEntry[] = [{ icon: <Thumb /> }, { icon: <Trash /> }];
const renderDock = (list: DockEntry[]) =>
  list.map((d, i) => (
    <DockItem key={i}>{d.icon}{d.badge && <Badge>{d.badge}</Badge>}{d.dot && <RunDot />}</DockItem>
  ));

/* ---------- menu bar icons ---------- */
const Apple = () => (
  <svg width="34" height="17" viewBox="0 0 34 17" fill="#fff">
    <path d="M10.300 4.600c.9 0 1.700-.6 2.400-.6.900 0 1.900.5 2.500 1.400-2.200 1.300-1.800 4.400.5 5.300-.6 1.700-1.800 3.800-3.200 3.800-.8 0-1.200-.5-2.200-.5s-1.500.5-2.200.5c-1.600 0-3.900-3.500-3.900-6.300 0-2.700 1.700-4.200 3.500-4.200 1 0 1.800.6 2.600.6z" transform="translate(-3.400 .3) scale(1.08)" />
    <path d="M7.600 4.700c-.1-1.900 1.300-3.500 3-3.600.2 1.900-1.400 3.600-3 3.600z" />
  </svg>
);
const MenuIcons = () => (
  <svg width="92" height="22" viewBox="0 0 92 22" fill="none" stroke="#fff">
    <g opacity=".25" strokeWidth="1.500"><path d="M6 17a6.500 6.500 0 1 1 10 0M7 17v-6h8v7M9.500 9v6M12 9v6" /></g>
    <path d="M37 8l7.500 7-4 4V4l4 4-7.500 7" opacity=".35" strokeWidth="1.200" />
    <g strokeWidth="2"><path d="M61 7.500a13.500 13.500 0 0 1 18.500 0M64 10.500a9 9 0 0 1 12.500 0M67 13.200a5 5 0 0 1 6.500 0" /></g>
    <path d="M68 15.200l2.300 2.500 2.300-2.500a3.500 3.500 0 0 0-4.600 0z" fill="#fff" stroke="none" />
  </svg>
);
const Battery = () => (
  <svg width="41" height="14" viewBox="0 0 41 14" fill="none" stroke="#fff" strokeWidth="1.200">
    <path d="M6 1.500H2.500a1 1 0 0 0-1 1v9a1 1 0 0 0 1 1H6M14 1.500h4.500a1 1 0 0 1 1 1v9a1 1 0 0 1-1 1H14" /><path d="M22.500 5v4" strokeWidth="2" />
    <path d="M12.500 1.500L6 8h3.500L8 13l6.500-7H11z" fill="#fff" stroke="none" />
  </svg>
);
const RightIcons = () => (
  <svg width="80" height="20" viewBox="0 0 80 20" fill="none" stroke="#fff">
    <circle cx="6.500" cy="9" r="4.700" strokeWidth="1.600" /><path d="M10 12.500l4.500 4.500" strokeWidth="1.800" />
    <defs><linearGradient id="si" x1="0" y1="0" x2="1" y2="1"><stop stopColor="#33a7e8" /><stop offset=".5" stopColor="#8f7be8" /><stop offset="1" stopColor="#ee4aa0" /></linearGradient></defs>
    <circle cx="41" cy="10" r="7.500" fill="url(#si)" stroke="#d8d2e8" /><path d="M36.500 11.500l4.500-4 4.500 4M41 7.500v4l-3 4M41 11.500l3 4" strokeWidth="1.500" />
    <path d="M64 5.500H79M64 10H77M64 14.500H79" strokeWidth="1.800" /><path d="M60.500 5.500h2M60.500 10h2M60.500 14.500h2" strokeWidth="1.800" />
  </svg>
);

const SideChevron = styled.span`
  position: relative;
  display: flex;
  svg + svg { position: absolute; right: -3px; bottom: -1px; }
`;

export default function App() {
  return (
    <>
      <GlobalStyle />
      <Desktop>
        <MenuBar>
          <Apple />
          <MenuItem $w={56} $bold $ls={-0.1}>Slack</MenuItem>
          <MenuItem $w={41}>File</MenuItem>
          <MenuItem $w={43}>Edit</MenuItem>
          <MenuItem $w={50}>View</MenuItem>
          <MenuItem $w={65}>History</MenuItem>
          <MenuItem $w={70} $ls={-0.4}>Window</MenuItem>
          <MenuItem $w={40}>Help</MenuItem>
          <MenuExtras>
            <MenuIcons />
            <Percent>31%</Percent>
            <Battery />
            <Clock>Mon 12:11 PM</Clock>
            <RightIcons />
          </MenuExtras>
        </MenuBar>

        <MainWindow>
          <TitleBar $h={22}>
            <WindowLights x={8} />
            <TitleText>El-MAVEN v0.11.0-beta.1-16-g3770ea8d QE1_yeast_05_G_rep1_t0.mzXML</TitleText>
          </TitleBar>
          <Toolbar>
            <Tool $w={44}><OpenIcon />Open</Tool>
            <Tool $w={46}><AlignIcon />Align</Tool>
            <Tool $w={62}><IsotopeIcon />Isotopes</Tool>
            <Tool $w={48}><PeaksIcon />Peaks</Tool>
            <Tool $w={60}><OptionsIcon />Options</Tool>
            <ToolbarFields>
              <Field $w={100} $h={20} />
              <PlusMinus>+/-</PlusMinus>
              <Spin w={108} v="10.000000" />
              <Space $w={5} />
              <Select $w={57} $mt={1}>ppm<Arrows w={6} h={12} /></Select>
            </ToolbarFields>
          </Toolbar>

          <Body>
            <Rail>
              <RailStrip $h={221} />
              <RailTab $h={98}><span>Compounds</span></RailTab>
              <RailTab $h={74} $on><span>Samples</span></RailTab>
              <RailStrip />
            </Rail>
            <Compounds>
              <PanelBar><WideSelect>KNOWNS</WideSelect></PanelBar>
              <Table>
                <Filter>Compound Name Filter</Filter>
                <HeadRow>
                  <HeadCell $w={100}>
                    name
                    <svg width="7" height="5" viewBox="0 0 7 5" fill="none" stroke="#333" strokeWidth="1.300"><path d="M1 1l2.500 2.500L6 1" /></svg>
                  </HeadCell>
                  <HeadCell $w={100}>m/z</HeadCell>
                </HeadRow>
                <Rows>
                  <RowList>
                    {compounds.map(([n, m], i) => (
                      <Row key={i} $on={n === 'PYRUVATE'}>
                        <NameCell>{n}</NameCell>
                        <NumCell>{m}</NumCell>
                        {n === 'PROLINE' && <><NumCell>1.12</NumCell><NumCell>amino acids</NumCell></>}
                      </Row>
                    ))}
                  </RowList>
                </Rows>
              </Table>
            </Compounds>
            <PlotColumn>
              <PlotBar><BoxPlotIcon /><LockIcon /></PlotBar>
              <Plot>
                <AreaChart>
                  <AreaHead>t AreaTop</AreaHead>
                  {areas.map(([e, n, w, c]) => (
                    <AreaRow key={n}><AreaExp>{e}</AreaExp><AreaBar $w={w} $c={c}><AreaName>{n}</AreaName></AreaBar></AreaRow>
                  ))}
                </AreaChart>
                <EicArea><Eic /></EicArea>
              </Plot>
            </PlotColumn>
            <SideBar>
              {sideIcons.map((ic, i) => (
                <SideTool key={i} $on={i === 1}>
                  <SideChevron>
                    <SideIcon>{ic}</SideIcon>
                    {i === 5 && <svg width="9" height="6" viewBox="0 0 9 6" fill="none" stroke="#222" strokeWidth="1.400"><path d="M1 1l3.500 3.500L8 1" /></svg>}
                  </SideChevron>
                </SideTool>
              ))}
              <Dotted />
              <SideTool><BookmarkPeakIcon /></SideTool>
            </SideBar>
          </Body>
          <StatusBar><a>pyruvate</a></StatusBar>
        </MainWindow>

        <Dialog>
          <DialogTitle $h={22}>
            <WindowLights x={7} />
            <TitleText $pr={2}>Peak Detection</TitleText>
          </DialogTitle>
          <Tabs>
            <Tab $w={191} $ls={-0.05}>Feature Detection Selection</Tab>
            <Tab $w={110} $ls={-0.12} $on>Group Filtering</Tab>
          </Tabs>
          <TabPane>
            <GroupTitle>
              <Check s={10} />
              <span>{'Automated Feature Detection:   Find peaks by slicing m/z and retention time space'}</span>
            </GroupTitle>
            <Group $h={117} $gap={12}>
              <FormRow $h={31} $pt={6}>
                <Label $w={184} $off>Mass Domain Resolution</Label>
                <Spin w={122} v="20.00" off /><Space $w={6} />
                <Label $w={143} $off>Limit m/z Range</Label>
                <Spin w={122} v="0.00" off /><Space $w={7} />
                <Spin w={122} v="999999999.00" off />
              </FormRow>
              <FormRow $h={25}>
                <Label $w={184} $off>Time Domain Resolution</Label>
                <Spin w={122} v="10 scans" off /><Space $w={6} />
                <Label $w={143} $off>Limit Time Range</Label>
                <Spin w={122} v="0.00" off /><Space $w={7} />
                <Spin w={122} v="999999999.00" off />
              </FormRow>
              <FormRow $h={29}>
                <Label $w={185} $dy={2} $off>Identify using database</Label>
                <Select $w={132} $mt={2} $off>None<Arrows c="#777" h={12} /></Select><Space $w={8} />
                <Label $w={143} $dy={2} $off>Limit Intensity Range</Label>
                <Spin w={122} v="50000.00" off /><Space $w={7} />
                <Spin w={122} v="9999999999.00" off />
              </FormRow>
              <FormRow $h={27}>
                <Label $w={184} $dy={1} $off><Check s={14} off />Match Retention Time (+/-)</Label>
                <Spin w={122} v="1.00 min" off />
              </FormRow>
            </Group>
            <GroupTitle>
              <Check s={10} on />
              <span>{'Compound Database Search:  Limit slices to set of known m/z and retention time values'}</span>
            </GroupTitle>
            <Group $h={142} $gap={12}>
              <FormRow $h={36} $pt={7}>
                <Label>Select Database</Label>
                <Select $w={241}>KNOWNS<Arrows h={12} /></Select><Space $w={1} />
              </FormRow>
              <FormRow $h={25}><Label>EIC Extraction Window (+/-)</Label><Spin w={230} v="10.00 ppm" /></FormRow>
              <FormRow $h={25}><Label $dy={1}><Check s={14} on />Match Retention Time (+/-)</Label><Spin w={230} v="1.00 min" /></FormRow>
              <FormRow $h={25}><Label>Match Retention Time (+/-)</Label><Spin w={230} v="10 best" /></FormRow>
              <FormRow $h={25}>
                <Label $dy={1}><Check s={14} />Detect adducts within</Label>
                <Spin w={231} v="0.50 seconds from parent ion" off /><Space $w={7} />
                <Spin w={230} v="with 90.0 % correlation" off />
              </FormRow>
            </Group>
            <GroupTitle $off>
              <Check s={10} off />
              <span>Match Fragmentation</span>
            </GroupTitle>
            <Group $h={129} $gap={0}>
              <FormRow $h={31} $pt={6}><Label $off>Fragment Mass Tolerance</Label><Spin w={355} v="20.00 ppm" off /></FormRow>
              <FormRow $h={25}><Label $off>Match at least X peaks</Label><Spin w={355} v="3" off /></FormRow>
              <FormRow $h={25}><Label $off>Scoring Algorithm</Label><Field $w={371} $h={21} $mr={-2} $ls={-0.14} $off>Hypergeometric Score</Field></FormRow>
              <FormRow $h={25}><Label $off>Minimum Score</Label><Spin w={355} v="0.00" off /></FormRow>
              <FormRow $h={19}><Label $off><Check s={14} off />Exclude unfragmented groups</Label></FormRow>
            </Group>
          </TabPane>
          <StatusPane>
            <Label>Status</Label>
            <ProgressRow>
              <Progress />
              <Button $w={96} $ml={15}>Find Peaks</Button>
              <Button $w={69} $ml={14}>Cancel</Button>
            </ProgressRow>
          </StatusPane>
          <DefaultsRow><Button $w={783}>Use Default Parameters</Button></DefaultsRow>
        </Dialog>

        <Rocks><RockTexture /></Rocks>
        <DockBar>
          {renderDock(dockA)}
          <DockSep><i /></DockSep>
          {renderDock(dockB)}
          <DockSep><i /></DockSep>
          {renderDock(dockC)}
        </DockBar>
      </Desktop>
    </>
  );
}
